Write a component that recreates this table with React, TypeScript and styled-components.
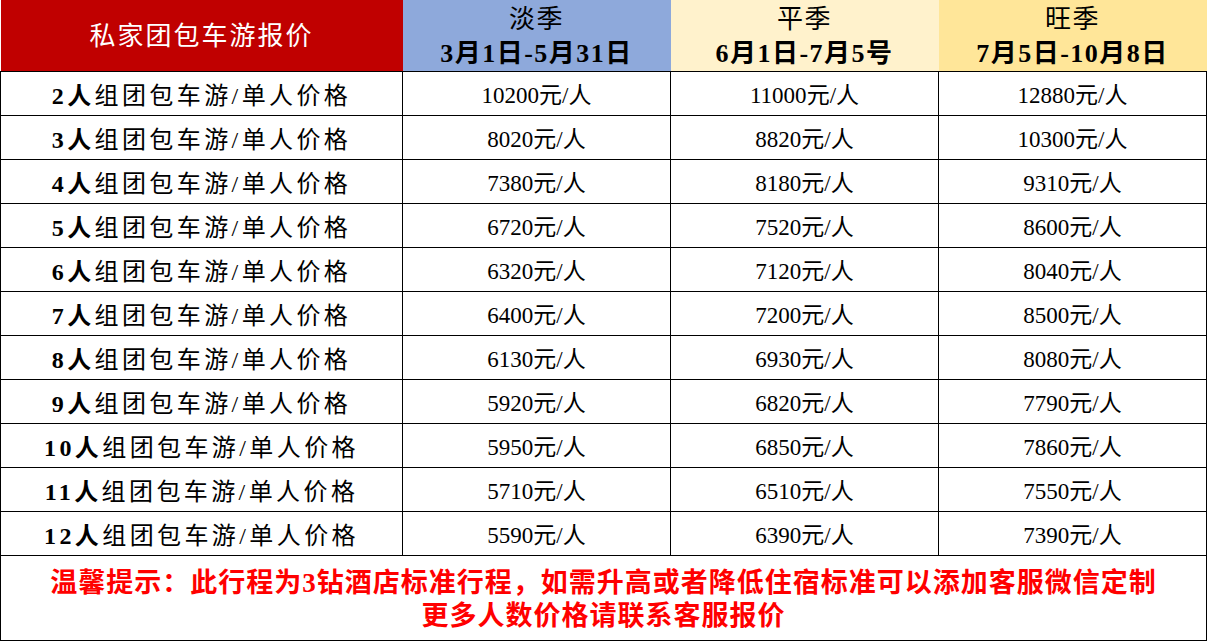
import React from 'react';
import styled, { createGlobalStyle } from 'styled-components';

const GlobalStyle = createGlobalStyle`
  html, body {
    margin: 0;
    padding: 0;
    background: #fff;
  }
  body {
    font-family: "Liberation Serif", "Noto Sans CJK SC", serif;
  }
`;

const Table = styled.table`
  width: 1206px;
  border-collapse: collapse;
  table-layout: fixed;
  color: #000;
`;

const HeadCell = styled.th<{ $bg: string; $light?: boolean }>`
  height: 68px;
  padding: 3px 0 0;
  background: ${p => p.$bg};
  color: ${p => (p.$light ? '#fff' : '#000')};
  font-weight: normal;
  text-align: center;
  vertical-align: middle;
  border-bottom: 1px solid #000;
`;

const HeadTitle = styled.div`
  font-size: 26px;
  letter-spacing: 2px;
  line-height: 34px;
`;

const SeasonName = styled.div`
  font-size: 26px;
  letter-spacing: 1.5px;
  line-height: 34px;
`;

const SeasonDate = styled.div`
  font-size: 26px;
  letter-spacing: 1.5px;
  line-height: 34px;
  font-weight: bold;
`;

const Cell = styled.td`
  height: 38px;
  padding: 5px 0 0;
  border: 1px solid #000;
  text-align: center;
  vertical-align: middle;
`;

const Label = styled.span`
  font-size: 24px;
  letter-spacing: 3.4px;
  line-height: 38px;
`;

const Strong = styled.b`
  font-weight: bold;
`;

const Price = styled.span`
  font-size: 23px;
  line-height: 38px;
`;

const NoteCell = styled.td`
  height: 80px;
  padding: 4px 0 0;
  border: 1px solid #000;
  text-align: center;
  vertical-align: middle;
  color: #ff0000;
  font-weight: bold;
  font-size: 27px;
  letter-spacing: 1px;
  line-height: 33px;
`;

const seasons = [
  { name: '淡季', date: '3月1日-5月31日', bg: '#8ea9db' },
  { name: '平季', date: '6月1日-7月5号', bg: '#fff2cc' },
  { name: '旺季', date: '7月5日-10月8日', bg: '#ffe699' },
];

const rows: [number, number, number, number][] = [
  [2, 10200, 11000, 12880],
  [3, 8020, 8820, 10300],
  [4, 7380, 8180, 9310],
  [5, 6720, 7520, 8600],
  [6, 6320, 7120, 8040],
  [7, 6400, 7200, 8500],
  [8, 6130, 6930, 8080],
  [9, 5920, 6820, 7790],
  [10, 5950, 6850, 7860],
  [11, 5710, 6510, 7550],
  [12, 5590, 6390, 7390],
];

export default function App() {
  return (
    <>
      <GlobalStyle />
      <Table>
        <colgroup>
          <col style={{ width: 402 }} />
          <col style={{ width: 268 }} />
          <col style={{ width: 268 }} />
          <col style={{ width: 268 }} />
        </colgroup>
        <thead>
          <tr>
            <HeadCell $bg="#c00000" $light>
              <HeadTitle>私家团包车游报价</HeadTitle>
            </HeadCell>
            {seasons.map(s => (
              <HeadCell key={s.name} $bg={s.bg}>
                <SeasonName>{s.name}</SeasonName>
                <SeasonDate>{s.date}</SeasonDate>
              </HeadCell>
            ))}
          </tr>
        </thead>
        <tbody>
          {rows.map(([n, a, b, c]) => (
            <tr key={n}>
              <Cell>
                <Label>
                  <Strong>{n}人</Strong>组团包车游/单人价格
                </Label>
              </Cell>
              <Cell><Price>{a}元/人</Price></Cell>
              <Cell><Price>{b}元/人</Price></Cell>
              <Cell><Price>{c}元/人</Price></Cell>
            </tr>
          ))}
          <tr>
            <NoteCell colSpan={4}>
              温馨提示：此行程为3钻酒店标准行程，如需升高或者降低住宿标准可以添加客服微信定制
              <br />
              更多人数价格请联系客服报价
            </NoteCell>
          </tr>
        </tbody>
      </Table>
    </>
  );
}
